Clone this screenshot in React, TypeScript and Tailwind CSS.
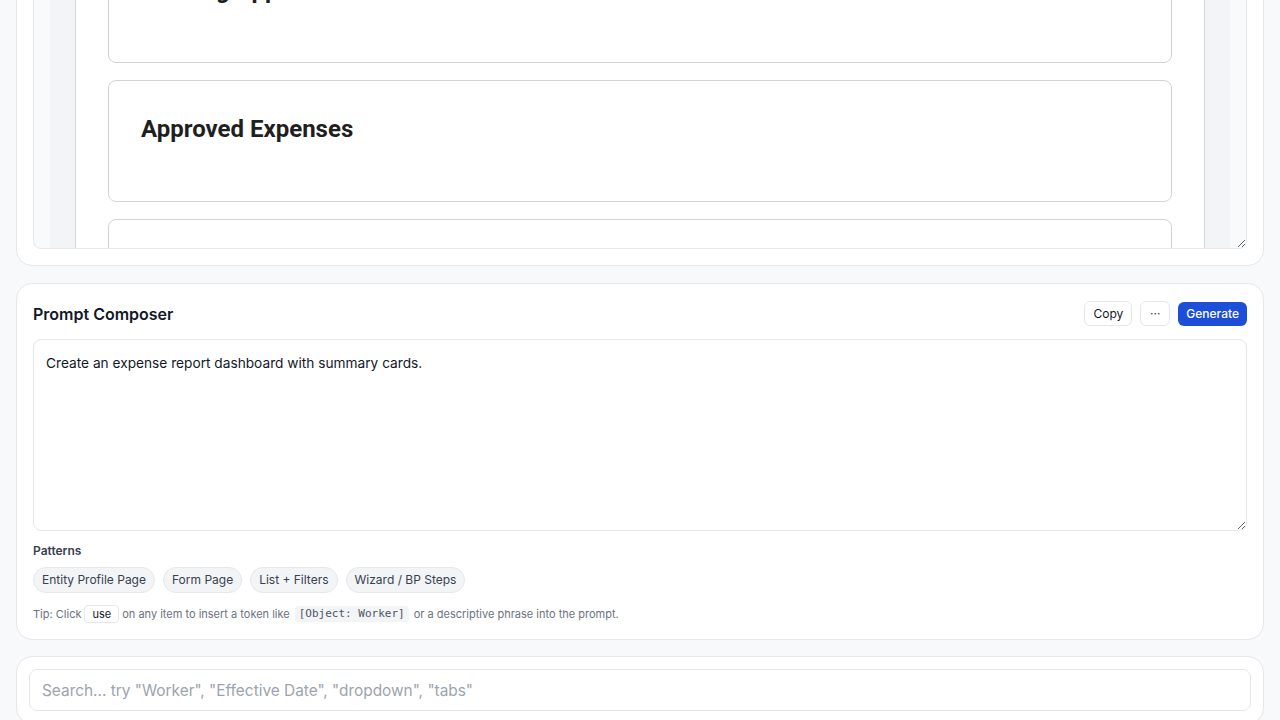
const cards = ["Pending Approvals", "Approved Expenses", "Reimbursements"];
const patterns = ["Entity Profile Page", "Form Page", "List + Filters", "Wizard / BP Steps"];

function PreviewCard({ title }: { title: string }) {
  return (
    <div className="rounded-lg border border-[#cfd3da] bg-white px-8 pt-8 pb-8">
      <h2 className="text-2xl leading-8 font-bold text-[#1f1f1f] mb-6 font-['Roboto',sans-serif]">{title}</h2>
    </div>
  );
}

function Preview() {
  return (
    <section className="-mt-[125px] rounded-2xl border border-[#e5e7eb] bg-white p-4">
      <div className="h-[341px] overflow-hidden resize-y rounded-lg border border-[#e5e7eb] bg-[#f9fafb] px-4 flex">
        <div className="flex-1 flex bg-[#f3f4f7] px-[25px]">
          <div className="flex-1 bg-white border-x border-[#d4d7dd] px-8 pt-8 flex flex-col gap-[17px]">
            {cards.map((c) => (
              <PreviewCard key={c} title={c} />
            ))}
          </div>
        </div>
      </div>
    </section>
  );
}

function Composer() {
  return (
    <section className="mt-px rounded-2xl border border-[#e5e7eb] bg-white p-4">
      <div className="flex items-center justify-between h-[27px] mb-3">
        <h3 className="text-base font-semibold text-[#111827]">Prompt Composer</h3>
        <div className="flex items-center gap-2">
          <button className="h-[25px] px-2 rounded-md border border-[#e5e7eb] bg-white text-xs text-[#111827]">Copy</button>
          <button className="h-[25px] w-[30px] rounded-md border border-[#e5e7eb] bg-white text-xs text-[#374151]">···</button>
          <button className="h-[24px] px-2 rounded-md bg-[#1d4ed8] text-xs font-medium text-white">Generate</button>
        </div>
      </div>
      <textarea
        className="block w-full h-[192px] rounded-lg border border-[#e5e7eb] px-3 py-[13px] text-[13.7px] text-[#111827] outline-none resize-y"
        defaultValue="Create an expense report dashboard with summary cards."
      />
      <div className="mt-3 text-xs leading-4 font-semibold text-[#374151]">Patterns</div>
      <div className="mt-2 flex gap-2">
        {patterns.map((p) => (
          <span key={p} className="h-[26px] flex items-center rounded-full border border-[#e5e7eb] bg-[#f3f4f6] px-2 text-xs text-[#374151]">
            {p}
          </span>
        ))}
      </div>
      <p className="mt-3 flex items-center text-[11px] leading-4 text-[#6b7280]">
        Tip: Click
        <span className="mx-[3px] inline-flex h-[18px] items-center rounded border border-[#e5e7eb] bg-white px-[7px] text-[#111827]">use</span>
        on any item to insert a token like
        <code className="mx-[5px] rounded bg-[#f3f4f6] px-1 font-['DejaVu_Sans_Mono',monospace] text-[11px] leading-4 text-[#4b5563]">[Object: Worker]</code>
        or a descriptive phrase into the prompt.
      </p>
    </section>
  );
}

function SearchBar() {
  return (
    <section className="rounded-2xl border border-[#e5e7eb] bg-white p-3">
      <input
        className="block w-full h-[42px] rounded-lg border border-[#e5e7eb] px-3 text-[15.4px] text-[#111827] placeholder:text-[#9ca3af] outline-none"
        placeholder={'Search... try "Worker", "Effective Date", "dropdown", "tabs"'}
      />
    </section>
  );
}

export default function App() {
  return (
    <div className="min-h-screen bg-[#f8f9fb] px-4 pt-4 pb-6 flex flex-col gap-4 font-['Inter',sans-serif]">
      <Preview />
      <Composer />
      <SearchBar />
    </div>
  );
}
